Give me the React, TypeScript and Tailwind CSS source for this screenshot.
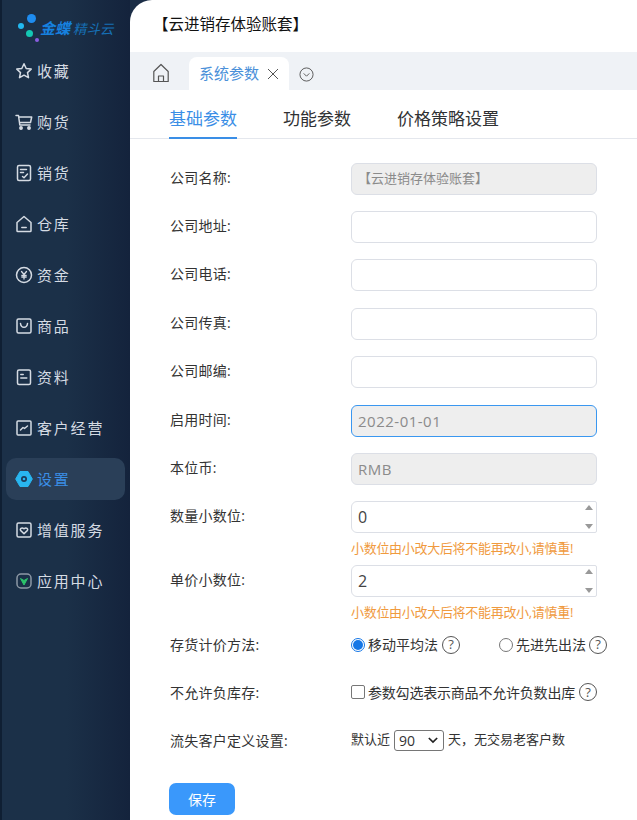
import React from "react";

const font = { fontFamily: '"Open Sans", "Noto Sans CJK SC", sans-serif' };

const iconCls = "h-[18px] w-[18px] shrink-0 text-[#d5dbe3]";

const Star = () => (
  <svg viewBox="0 0 18 18" className={iconCls} fill="none" stroke="currentColor" strokeWidth="1.5" strokeLinejoin="round">
    <path d="M9 1.8l2.2 4.7 5 .6-3.7 3.5 1 5.1L9 13.2l-4.5 2.5 1-5.1L1.800 7.100l5-.6z" />
  </svg>
);
const Cart = () => (
  <svg viewBox="0 0 18 18" className={iconCls} fill="none" stroke="currentColor" strokeWidth="1.5" strokeLinejoin="round" strokeLinecap="round">
    <path d="M1 2.500h2.500l1.300 9.500h10.200M3.700 4h13l-1.200 5.500H4.500" />
    <circle cx="6" cy="15" r="1.200" fill="currentColor" />
    <circle cx="14" cy="15" r="1.200" fill="currentColor" />
  </svg>
);
const Sales = () => (
  <svg viewBox="0 0 18 18" className={iconCls} fill="none" stroke="currentColor" strokeWidth="1.500" strokeLinecap="round" strokeLinejoin="round">
    <rect x="2.500" y="1.500" width="13" height="15" rx="1.500" />
    <path d="M5.500 5.500h6M5.500 8.500h3M7.500 12.500l1.500 1.300 3.500-3.800" />
  </svg>
);
const Store = () => (
  <svg viewBox="0 0 18 18" className={iconCls} fill="none" stroke="currentColor" strokeWidth="1.500" strokeLinejoin="round" strokeLinecap="round">
    <path d="M9 1.500L2 7.500v8.200c0 .5.300.8.800.8h12.400c.5 0 .8-.3.800-.8V7.500z" />
    <path d="M6.800 12.500h4.400" />
  </svg>
);
const Money = () => (
  <svg viewBox="0 0 18 18" className={iconCls} fill="none" stroke="currentColor" strokeLinecap="round">
    <circle cx="9" cy="9" r="7.500" strokeWidth="1.500" />
    <path d="M6.500 5.500L9 8.500l2.500-3M9 8.500V13M6.800 9.300h4.400M6.800 11h4.400" strokeWidth="1.300" />
  </svg>
);
const Goods = () => (
  <svg viewBox="0 0 18 18" className={iconCls} fill="none" stroke="currentColor" strokeWidth="1.500" strokeLinecap="round">
    <rect x="2" y="2" width="14" height="14" rx="1.500" />
    <path d="M5.500 6.500c.5 5 6.500 5 7 0" />
  </svg>
);
const Docs = () => (
  <svg viewBox="0 0 18 18" className={iconCls} fill="none" stroke="currentColor" strokeWidth="1.500" strokeLinecap="round">
    <rect x="2.500" y="2" width="13" height="14.500" rx="1.500" />
    <path d="M5.800 6.500h2.400M5.800 10h6" />
  </svg>
);
const Chart = () => (
  <svg viewBox="0 0 18 18" className={iconCls} fill="none" stroke="currentColor" strokeWidth="1.500" strokeLinecap="round" strokeLinejoin="round">
    <rect x="2" y="2" width="14" height="14" rx="1" />
    <path d="M5.500 11l2.500-2.500 1.500 1L12.500 7" />
  </svg>
);
const Gear = () => (
  <svg viewBox="0 0 18 18" className="h-[18px] w-[18px] shrink-0">
    <path d="M5 1.500h8L17.300 9 13 16.500H5L.700 9z" fill="#29b6f0" stroke="#29b6f0" strokeWidth="1" strokeLinejoin="round" />
    <circle cx="9" cy="9" r="3" fill="#1d3a58" />
    <circle cx="9" cy="9" r="1.300" fill="#29b6f0" />
  </svg>
);
const Heart = () => (
  <svg viewBox="0 0 18 18" className={iconCls} fill="none" stroke="currentColor" strokeWidth="1.500" strokeLinejoin="round">
    <rect x="2" y="2" width="14" height="14" rx="1.500" />
    <path d="M9 12.800L5.800 9.600c-1.500-1.700.9-3.800 3.200-1.800 2.300-2 4.700.1 3.200 1.800z" />
  </svg>
);
const AppCenter = () => (
  <svg viewBox="0 0 18 18" className="h-[18px] w-[18px] shrink-0" fill="none">
    <rect x="2" y="2" width="14" height="14" rx="4" stroke="#8d98a5" strokeWidth="1.500" />
    <path d="M5.500 6.500L9 13l3.500-6.500L9 8.500z" fill="#2cc36b" stroke="#2cc36b" strokeWidth="1" strokeLinejoin="round" />
  </svg>
);

const menu = [
  { label: "收藏", icon: <Star /> },
  { label: "购货", icon: <Cart /> },
  { label: "销货", icon: <Sales /> },
  { label: "仓库", icon: <Store /> },
  { label: "资金", icon: <Money /> },
  { label: "商品", icon: <Goods /> },
  { label: "资料", icon: <Docs /> },
  { label: "客户经营", icon: <Chart /> },
  { label: "设置", icon: <Gear />, active: true },
  { label: "增值服务", icon: <Heart /> },
  { label: "应用中心", icon: <AppCenter /> },
];

const Help = () => (
  <span className="inline-flex h-[18px] w-[18px] shrink-0 items-center justify-center rounded-full border-[1.5px] border-[#555] text-[13px] leading-none text-[#555]">
    ?
  </span>
);

const Row = ({ label, className, children }: { label: string; className: string; children: React.ReactNode }) => (
  <div className={`flex items-center ${className}`}>
    <div className="w-[181px] shrink-0 pb-[4px] text-[14px] tracking-[0.25px] text-[#333]">{label}</div>
    {children}
  </div>
);

const Field = ({ value, disabled, focus, small }: { value?: string; disabled?: boolean; focus?: boolean; small?: boolean }) => (
  <div
    className={`flex h-[32px] w-[246px] items-center rounded-[6px] border px-[6px] ${
      small ? "text-[13px]" : "text-[15px] tracking-[0.5px]"
    } ${focus ? "border-[#3a97f0]" : "border-[#dcdfe6]"} ${disabled ? "bg-[#eeeeee] text-[#8b8b8b]" : "bg-white"}`}
  >
    {value}
  </div>
);

const NumField = ({ value }: { value: string }) => (
  <div className="relative flex h-[32px] w-[246px] items-center rounded-l-[6px] rounded-r-[2px] border border-[#dcdfe6] px-[6px] text-[16px] text-[#444]">
    {value}
    <div className="absolute right-[3px] top-[3px] flex h-[24px] flex-col justify-between">
      <div className="h-0 w-0 border-x-[4px] border-b-[5px] border-x-transparent border-b-[#999]" />
      <div className="h-0 w-0 border-x-[4px] border-t-[5px] border-x-transparent border-t-[#999]" />
    </div>
  </div>
);

const Hint = () => (
  <div className="ml-[181px] text-[13px] leading-[16px] tracking-[-0.3px] text-[#f09a3e]">小数位由小改大后将不能再改小,请慎重!</div>
);

export default function App() {
  return (
    <div className="flex h-[820px] w-[637px] overflow-hidden bg-[#1b2d46]" style={font}>
      <div className="w-[2px] shrink-0 bg-[#0f1f33]" />
      <aside className="w-[128px] shrink-0 bg-gradient-to-r from-[#1b3048] via-[#1b3048] to-[#14233c]">
        <div className="relative h-[50px]">
          <span className="absolute left-[25px] top-[14px] h-[9px] w-[9px] rounded-full bg-[#1e8cf0]" />
          <span className="absolute left-[16px] top-[23px] h-[6px] w-[6px] rounded-full bg-[#22b8f0]" />
          <span className="absolute left-[24px] top-[30px] h-[7px] w-[7px] rounded-full bg-[#14c8b4]" />
          <span className="absolute left-[33px] top-[38px] h-[4px] w-[4px] rounded-full bg-[#8a5ee0]" />
          <span className="absolute left-[38px] top-[18px] whitespace-nowrap text-[15px] italic leading-[20px]">
            <span className="font-bold text-[#1681e0]">金蝶</span>
            <span className="ml-[3px] text-[13.5px] text-[#1670b5]">精斗云</span>
          </span>
        </div>
        <nav className="flex flex-col gap-[9px] pl-[4px] pr-[5px]">
          {menu.map((m) => (
            <div
              key={m.label}
              className={`flex h-[42px] items-center gap-[4px] rounded-[10px] pl-[9px] text-[15px] tracking-[1.8px] ${
                m.active ? "bg-[#2a3f58] text-[#3a8ee6]" : "text-[#d5dbe3]"
              }`}
            >
              {m.icon}
              <span>{m.label}</span>
            </div>
          ))}
        </nav>
      </aside>
      <main className="min-w-0 flex-1 overflow-hidden rounded-tl-[22px] bg-white">
        <div className="flex h-[52px] items-center pb-[2px] pl-[23px] text-[15.5px] text-[#111]">【云进销存体验账套】</div>
        <div className="flex h-[38px] items-end bg-[#eff2f6] pl-[22px]">
          <svg viewBox="0 0 18 20" className="mb-[7px] h-[20px] w-[18px] text-[#555]" fill="none" stroke="currentColor" strokeWidth="1.200" strokeLinejoin="round">
            <path d="M9 1.500L1.800 8.500v10h14.400v-10zM6.500 18.500v-5.500h5v5.500" />
          </svg>
          <div className="ml-[19px] flex h-[33px] w-[100px] items-center rounded-t-[8px] bg-white pl-[10px] text-[15px] text-[#4a90d9]">
            系统参数
            <svg viewBox="0 0 12 12" className="ml-[8px] h-[12px] w-[12px] text-[#555]" fill="none" stroke="currentColor" strokeWidth="1">
              <path d="M1 1l10 10M11 1L1 11" />
            </svg>
          </div>
          <svg viewBox="0 0 16 16" className="mb-[8px] ml-[10px] h-[15px] w-[15px] text-[#555]" fill="none" stroke="currentColor" strokeWidth="1">
            <circle cx="8" cy="8" r="7" />
            <path d="M5 6.800l3 3 3-3" />
          </svg>
        </div>
        <div className="flex h-[49px] gap-[46px] border-b border-[#e4e7ed] pl-[39px] text-[17px] text-[#303133]">
          <div className="flex h-[49px] items-center border-b-2 border-[#3a8ee6] pt-[10px] text-[#3a8ee6]">基础参数</div>
          <div className="flex h-[48px] items-center pt-[10px]">功能参数</div>
          <div className="flex h-[48px] items-center pt-[10px]">价格策略设置</div>
        </div>
        <form className="pl-[40px] pt-[24px]">
          <Row label="公司名称:" className="mb-[16px]"><Field value="【云进销存体验账套】" disabled small /></Row>
          <Row label="公司地址:" className="mb-[16px]"><Field /></Row>
          <Row label="公司电话:" className="mb-[17px]"><Field /></Row>
          <Row label="公司传真:" className="mb-[16px]"><Field /></Row>
          <Row label="公司邮编:" className="mb-[17px]"><Field /></Row>
          <Row label="启用时间:" className="mb-[16px]"><Field value="2022-01-01" disabled focus /></Row>
          <Row label="本位币:" className="mb-[16px]"><Field value="RMB" disabled /></Row>
          <Row label="数量小数位:" className="mb-[7px]"><NumField value="0" /></Row>
          <Hint />
          <Row label="单价小数位:" className="mb-[7px] mt-[9px]"><NumField value="2" /></Row>
          <Hint />
          <Row label="存货计价方法:" className="mt-[10px] h-[32px]">
            <div className="flex items-center pb-[3px] text-[14px] text-[#333]">
              <span className="flex h-[14px] w-[14px] items-center justify-center rounded-full border border-[#1677e6]">
                <span className="h-[10px] w-[10px] rounded-full bg-[#1677e6]" />
              </span>
              <span className="ml-[3px] mr-[4px]">移动平均法</span>
              <Help />
              <span className="ml-[39px] h-[14px] w-[14px] rounded-full border border-[#777]" />
              <span className="ml-[3px] mr-[3px]">先进先出法</span>
              <Help />
            </div>
          </Row>
          <Row label="不允许负库存:" className="mt-[16px] h-[32px]">
            <div className="flex items-center pb-[4px] text-[14px] tracking-[-0.2px] text-[#333]">
              <span className="h-[14px] w-[14px] rounded-[2px] border border-[#777]" />
              <span className="ml-[3px] mr-[4px]">参数勾选表示商品不允许负数出库</span>
              <Help />
            </div>
          </Row>
          <Row label="流失客户定义设置:" className="mt-[16px] h-[32px]">
            <div className="flex items-center pb-[4px] text-[13px] text-[#333]">
              默认近
              <div className="mx-[4px] flex h-[21px] w-[50px] items-center justify-between rounded-[3px] border border-[#767676] pl-[4px] pr-[5px] text-[14px]">
                90
                <svg viewBox="0 0 12 8" className="h-[7px] w-[10px]" fill="none" stroke="#222" strokeWidth="2">
                  <path d="M1 1l5 5 5-5" />
                </svg>
              </div>
              天，无交易老客户数
            </div>
          </Row>
          <button type="button" className="-ml-[1px] mt-[25px] flex h-[32px] w-[66px] items-center justify-center rounded-[7px] bg-[#3a98fb] text-[14px] text-white">
            保存
          </button>
        </form>
      </main>
    </div>
  );
}
